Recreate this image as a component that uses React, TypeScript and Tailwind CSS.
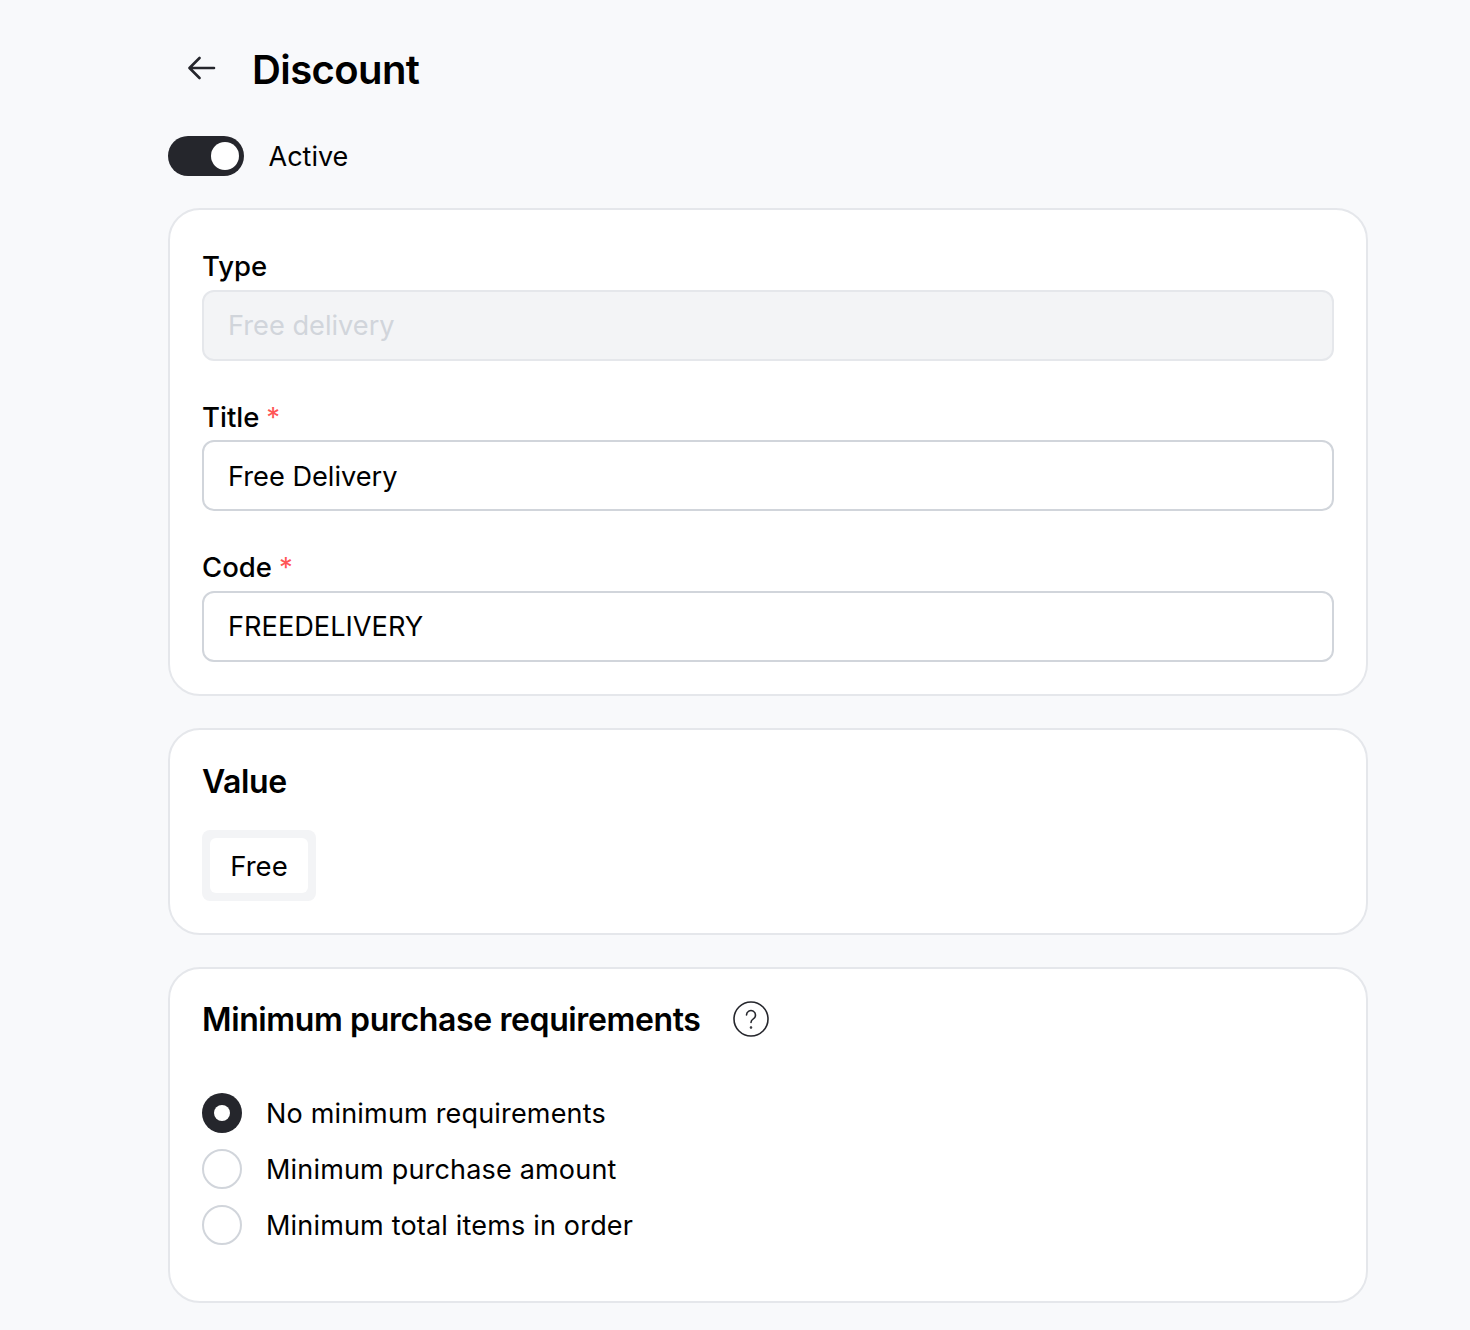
function Label({ text, required, tall }: { text: string; required?: boolean; tall?: boolean }) {
  return (
    <div className={(tall ? "h-[31px]" : "h-[30px]") + " text-[27.5px] leading-[30px] text-black"}>
      <span className="font-medium">{text}</span>
      {required && <span className="ml-[7px] text-[#f55]">*</span>}
    </div>
  );
}

function Field({ value, disabled, textTop }: { value: string; disabled?: boolean; textTop: string }) {
  return (
    <div
      className={
        "mt-[8px] flex h-[71px] items-center rounded-[12px] border-2 px-[24px] text-[27.2px] " +
        textTop +
        (disabled ? " border-[#e5e7eb] bg-[#f3f4f6] text-[#d1d5db]" : " border-[#d1d5db] bg-white text-black")
      }
    >
      {value}
    </div>
  );
}

function Radio({ label, checked }: { label: string; checked?: boolean }) {
  return (
    <div className="flex h-[40px] items-center gap-[24px]">
      {checked ? (
        <span className="flex h-[40px] w-[40px] items-center justify-center rounded-full bg-[#25262c]">
          <span className="h-[16px] w-[16px] rounded-full bg-white" />
        </span>
      ) : (
        <span className="h-[40px] w-[40px] rounded-full border-2 border-[#d1d5db] bg-white" />
      )}
      <span className="pt-[2px] text-[27px] leading-[40px] tracking-[0.18px] text-black">{label}</span>
    </div>
  );
}

export default function App() {
  return (
    <div className="min-h-[1330px] bg-[#f8f9fb] pl-[168px] pr-[102px] font-['Inter',sans-serif]">
      <div className="flex h-[136px] items-center pl-[20px] pt-[4px]">
        <svg width="28" height="24" viewBox="0 0 28 24" fill="none" stroke="#25262c" strokeWidth="2.6" strokeLinecap="round" strokeLinejoin="round" className="-mt-[4px]">
          <path d="M26 12H2.5M11.5 2L1.5 12l10 10" />
        </svg>
        <h1 className="ml-[36px] text-[40px] font-semibold tracking-[-0.6px] text-black">Discount</h1>
      </div>
      <div className="flex h-[40px] items-center gap-[25px]">
        <div className="flex h-[40px] w-[76px] items-center justify-end rounded-full bg-[#25262c] pr-[5px]">
          <span className="h-[28px] w-[28px] rounded-full bg-white" />
        </div>
        <span className="-ml-[0.5px] pt-[2px] text-[27px] leading-[40px] text-black">Active</span>
      </div>
      <section className="mt-[32px] rounded-[32px] border-2 border-[#e5e7eb] bg-white px-[32px] pb-[32px] pt-[41px]">
        <Label text="Type" tall />
        <Field value="Free delivery" disabled textTop="pt-[2px]" />
        <div className="h-[41px]" />
        <Label text="Title" required />
        <Field value="Free Delivery" textTop="pt-[4px]" />
        <div className="h-[41px]" />
        <Label text="Code" required tall />
        <Field value="FREEDELIVERY" textTop="pt-[2px]" />
      </section>
      <section className="mt-[32px] h-[207px] rounded-[32px] border-2 border-[#e5e7eb] bg-white px-[32px] pt-[32px]">
        <h2 className="text-[32px] font-semibold leading-[40px] tracking-[-0.4px] text-black">Value</h2>
        <div className="mt-[28px] inline-flex rounded-[8px] bg-[#f3f4f6] p-[8px]">
          <div className="h-[55px] w-[98px] rounded-[6px] bg-white text-center text-[27.5px] leading-[57px] text-black">Free</div>
        </div>
      </section>
      <section className="mt-[32px] h-[336px] rounded-[32px] border-2 border-[#e5e7eb] bg-white px-[32px] pt-[30px]">
        <div className="flex items-center gap-[32px]">
          <h2 className="pt-[2px] text-[32px] font-semibold leading-[38px] tracking-[-0.38px] text-black">Minimum purchase requirements</h2>
          <svg width="36" height="36" viewBox="0 0 36 36" fill="none" stroke="#25262c" strokeWidth="1.6" strokeLinecap="round">
            <circle cx="18" cy="18" r="17" />
            <path d="M13.5 14a4.5 4.5 0 1 1 6.8 3.9c-1.5.9-2.3 1.8-2.3 3.6" />
            <circle cx="18" cy="26.5" r="0.5" />
          </svg>
        </div>
        <div className="mt-[54px] flex flex-col gap-[16px]">
          <Radio label="No minimum requirements" checked />
          <Radio label="Minimum purchase amount" />
          <Radio label="Minimum total items in order" />
        </div>
      </section>
    </div>
  );
}
